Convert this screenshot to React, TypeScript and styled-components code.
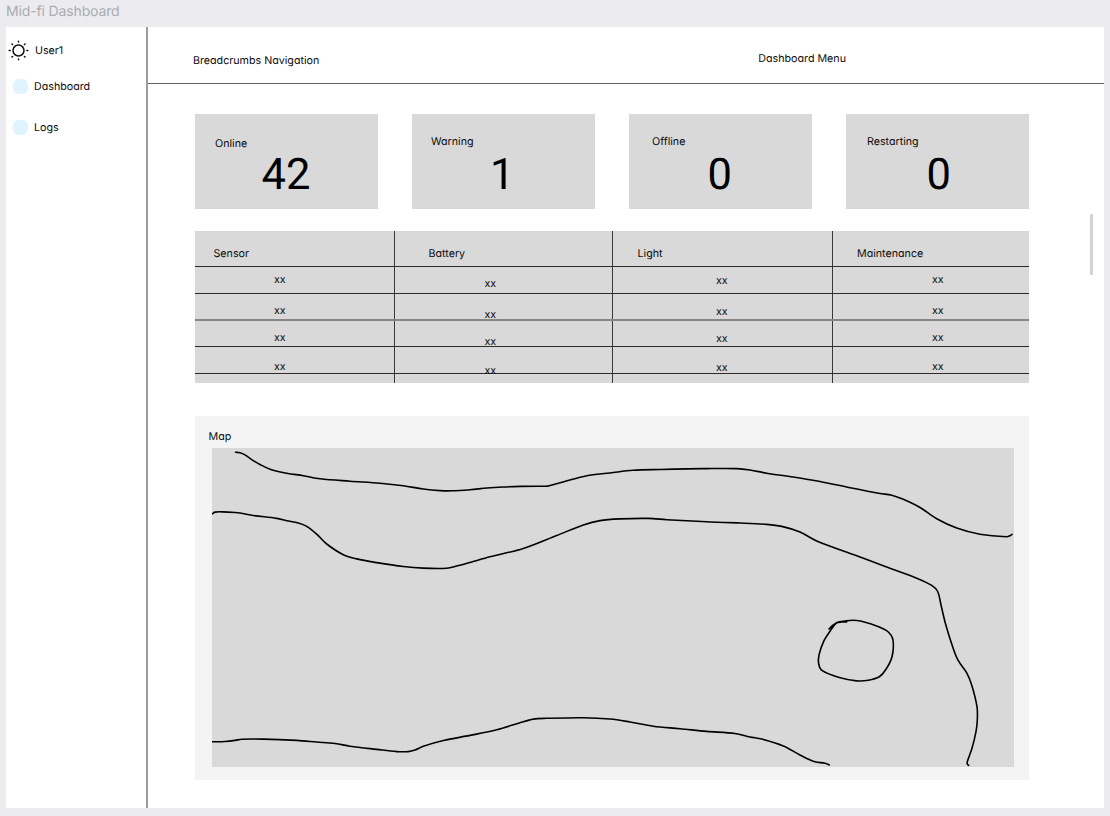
import React from "react";
import styled, { createGlobalStyle } from "styled-components";

const GlobalStyle = createGlobalStyle`
  * { box-sizing: border-box; }
  body {
    margin: 0;
    background: #ebebf0;
    color: #0c0c0c;
    font-family: Inter, "Liberation Sans", sans-serif;
    font-size: 10.7px;
    line-height: 16px;
    text-rendering: geometricPrecision;
  }
`;

const Canvas = styled.div`
  width: 1110px;
  height: 816px;
  padding: 0 6px 8px;
  display: flex;
  flex-direction: column;
  overflow: hidden;
`;

const FrameTitle = styled.div`
  height: 27px;
  flex: none;
  padding-top: 4px;
  font-size: 14px;
  line-height: 16px;
  letter-spacing: -0.14px;
  color: #acacb0;
`;

const Frame = styled.div`
  flex: 1;
  display: flex;
  background: #fff;
`;

const Label = styled.span`
  display: block;
  white-space: nowrap;
  font-feature-settings: "cv11";
`;

const Sidebar = styled.nav`
  width: 142px;
  flex: none;
  border-right: 2px solid #9c9c9c;
  padding: 13px 0 0 2px;
`;

const UserRow = styled.div`
  display: flex;
  align-items: center;
  gap: 6px;
  height: 21px;
`;

const NavItem = styled.div`
  display: flex;
  align-items: center;
  gap: 6px;
  height: 15px;
  margin: 18px 0 26px 5px;
  & + & { margin-top: 0; }
`;

const Dot = styled.i`
  width: 15px;
  height: 15px;
  border-radius: 6px;
  background: #dff4fe;
`;

const Main = styled.div`
  flex: 1;
  display: flex;
  flex-direction: column;
`;

const Header = styled.header`
  height: 57px;
  flex: none;
  display: flex;
  align-items: flex-start;
  border-bottom: 1px solid #606060;
  padding: 24px 258px 0 45px;
  justify-content: space-between;
`;

const Crumbs = styled.div`
  padding-top: 2px;
`;

const Body = styled.div`
  flex: 1;
  display: flex;
  justify-content: space-between;
  padding: 30px 11px 0 47px;
`;

const Content = styled.main`
  width: 834px;
`;

const ScrollThumb = styled.div`
  width: 3px;
  height: 61px;
  margin-top: 100px;
  border-radius: 1px;
  background: #d3d3d3;
`;

const Cards = styled.section`
  display: grid;
  grid-template-columns: repeat(4, 183px);
  justify-content: space-between;
`;

const Card = styled.div`
  height: 95px;
  background: #d9d9d9;
`;

const CardLabel = styled.div<{ $left: number; $top: number }>`
  height: 39px;
  padding: ${(p) => p.$top}px 0 0 ${(p) => p.$left}px;
`;

const CardValue = styled.div<{ $left: number }>`
  padding-left: ${(p) => p.$left}px;
  font-family: Roboto, sans-serif;
  font-size: 43.5px;
  line-height: 44px;
  color: #000;
`;

const Table = styled.section`
  margin-top: 22px;
  height: 152px;
  background: #d9d9d9;
`;

const Row = styled.div<{ $height: number; $line?: string }>`
  display: grid;
  grid-template-columns: 200px 218px 220px 196px;
  grid-template-rows: 100%;
  height: ${(p) => p.$height}px;
  border-bottom: ${(p) => p.$line ?? "1px solid #2c2c2c"};
`;

const Cell = styled.div<{ $left: number; $top: number }>`
  padding: ${(p) => p.$top}px 0 0 ${(p) => p.$left}px;
  border-right: 1px solid #3a3a3a;
  &:last-child { border-right: 0; }
`;

const MapPanel = styled.section`
  margin-top: 33px;
  height: 364px;
  padding: 13px 15px 0 13.5px;
  background: #f4f4f4;
`;

const MapArea = styled.svg`
  display: block;
  width: 802px;
  height: 319px;
  margin: 3px 0 0 3.5px;
  background: #d9d9d9;
`;

type Point = [number, number];

/* Smooth curve through every point (Catmull-Rom converted to cubic Béziers). */
function curve(pts: Point[]): string {
  let d = `M${pts[0][0]} ${pts[0][1]}`;
  for (let i = 0; i < pts.length - 1; i++) {
    const a = pts[Math.max(i - 1, 0)];
    const b = pts[i];
    const c = pts[i + 1];
    const e = pts[Math.min(i + 2, pts.length - 1)];
    const len = Math.hypot(c[0] - b[0], c[1] - b[1]);
    const handle = (p: Point, q: Point): Point => {
      const m = Math.hypot(q[0] - p[0], q[1] - p[1]) || 1;
      return [((q[0] - p[0]) / m) * (len / 3), ((q[1] - p[1]) / m) * (len / 3)];
    };
    const h1 = handle(a, c);
    const h2 = handle(b, e);
    d += `C${b[0] + h1[0]} ${b[1] + h1[1]} ${c[0] - h2[0]} ${c[1] - h2[1]} ${c[0]} ${c[1]}`;
  }
  return d;
}

const contours: Point[][] = [
  [[235.5, 452.3], [240, 452.7], [245, 454.9], [251.7, 459.7], [260, 464.5], [270, 469.2], [286.7, 473.2], [303.3, 475.7], [320, 478.8], [350, 481.2], [380, 483.2], [403.3, 485.7], [423.3, 489], [440, 490.6], [451.7, 490.8], [470, 489.7], [487, 488], [503, 487], [520, 486.4], [547.3, 486.2]],
  [[547.3, 486.2], [563, 482], [586.7, 475.7], [610, 473], [633, 470.3], [660, 469.5], [706.7, 468.6], [736.7, 468.6], [750, 470], [766.7, 473.2], [793.3, 477], [820, 481.5], [850, 487.7], [880, 493.5], [891.7, 495.2], [903.3, 499.3], [920, 507.5], [936.7, 518.7], [956.7, 528], [980, 534.2], [1006.7, 536.7], [1010.5, 535.4], [1012, 534.3]],
  [[212.6, 513.7], [215, 512.1], [223.3, 511.9], [238, 512.8], [253.3, 515.5], [276.7, 518.4], [286.7, 520.7], [298.3, 523.1], [306.7, 526.4], [316.7, 534.2], [326.7, 544], [343.3, 554.7], [356.7, 558.9], [376.7, 562.6], [403.3, 566.5], [423.3, 568.1], [446.7, 568.2], [456.7, 566], [470, 562.4], [490, 556.8], [523.3, 548.4], [556.7, 535.5], [583.3, 525], [600, 520.6], [620, 518.9], [648.3, 518.4], [666.7, 519.7], [706.7, 521.8], [740, 523], [766.7, 524.4], [781.7, 526.4], [800, 532], [816.7, 541], [856.7, 555.8], [886.7, 567.1], [916.7, 578.2], [931.7, 585.4], [937.7, 591.5], [941, 605], [945.7, 624.5], [953.3, 648.7], [958.3, 660.7], [966.7, 672.9], [971.7, 685], [977, 706.7], [977.3, 720], [976, 731.7], [972, 748.3], [967.3, 761.7], [967.4, 764.3], [968.7, 765.3]],
  [[829, 629], [833.3, 625], [838.3, 622], [856.7, 620.5], [876.7, 626], [888.3, 632], [893, 640], [892, 656.7], [886, 669.3], [879.3, 676.8], [868.3, 680.3], [856.7, 680.9], [838.3, 677.3], [822.3, 670.7], [818.7, 664], [819, 655], [824, 640.7], [830, 631.3], [836, 623.3], [841.7, 622], [846.7, 622]],
  [[212.5, 741.8], [225, 741.5], [235, 740.4], [241.7, 739.2], [263.3, 739.1], [296.7, 740.4], [316.7, 742], [335, 743.5], [350, 746.2], [376.7, 749.4], [396.7, 751.6], [408.3, 751.6], [415, 750], [423.3, 746.3], [443.3, 740.5], [470, 735.4], [496.7, 729.8], [520, 722.7], [533.3, 719.1], [546.7, 718.3], [583.3, 717.7], [610, 719], [630, 722], [653.3, 726.3], [680, 728.7], [706.7, 731.4], [735, 733.5], [750, 737], [761.7, 739.1], [783.3, 746], [800, 755], [815, 761.8], [825, 763.2], [829.3, 765]],
];

const stats = [
  { name: "Online", value: "42", left: 20, top: 22, valueLeft: 66.5 },
  { name: "Warning", value: "1", left: 19, top: 20, valueLeft: 78 },
  { name: "Offline", value: "0", left: 23, top: 20, valueLeft: 78.5 },
  { name: "Restarting", value: "0", left: 21, top: 20, valueLeft: 80.5 },
];

const columns = [
  { name: "Sensor", left: 18.5, cellLeft: 79, shift: 0 },
  { name: "Battery", left: 33.5, cellLeft: 89.5, shift: 4 },
  { name: "Light", left: 24.5, cellLeft: 103, shift: 1 },
  { name: "Maintenance", left: 24, cellLeft: 99, shift: 0 },
];

const rows = [
  { height: 27, top: 5, line: undefined },
  { height: 27, top: 9, line: "2px solid #858885" },
  { height: 26, top: 9, line: undefined },
  { height: 27, top: 12, line: undefined },
];

function SunIcon() {
  return (
    <svg width="21" height="21" viewBox="-10.5 -10.5 21 21" fill="none" stroke="#111">
      <circle r="5.5" strokeWidth="1.5" />
      {[0, 45, 90, 135, 180, 225, 270, 315].map((a) => (
        <path key={a} d="M8.4 0H9.3" strokeWidth="1.5" strokeLinecap="round" transform={`rotate(${a})`} />
      ))}
    </svg>
  );
}

export default function App() {
  return (
    <>
      <GlobalStyle />
      <Canvas>
        <FrameTitle>Mid-fi Dashboard</FrameTitle>
        <Frame>
          <Sidebar>
            <UserRow>
              <SunIcon />
              <Label>User1</Label>
            </UserRow>
            <NavItem><Dot /><Label>Dashboard</Label></NavItem>
            <NavItem><Dot /><Label>Logs</Label></NavItem>
          </Sidebar>
          <Main>
            <Header>
              <Crumbs><Label>Breadcrumbs Navigation</Label></Crumbs>
              <Label>Dashboard Menu</Label>
            </Header>
            <Body>
              <Content>
                <Cards>
                  {stats.map((s) => (
                    <Card key={s.name}>
                      <CardLabel $left={s.left} $top={s.top}><Label>{s.name}</Label></CardLabel>
                      <CardValue $left={s.valueLeft}>{s.value}</CardValue>
                    </Card>
                  ))}
                </Cards>
                <Table>
                  <Row $height={36}>
                    {columns.map((c) => (
                      <Cell key={c.name} $left={c.left} $top={15}><Label>{c.name}</Label></Cell>
                    ))}
                  </Row>
                  {rows.map((r, i) => (
                    <Row key={i} $height={r.height} $line={r.line}>
                      {columns.map((c) => (
                        <Cell key={c.name} $left={c.cellLeft} $top={r.top + c.shift}><Label>xx</Label></Cell>
                      ))}
                    </Row>
                  ))}
                  <Row $height={9} $line="0">
                    {columns.map((c) => <Cell key={c.name} $left={0} $top={0} />)}
                  </Row>
                </Table>
                <MapPanel>
                  <Label>Map</Label>
                  <MapArea viewBox="212 448 802 319" fill="none" stroke="#000" strokeWidth="1.6" strokeLinecap="round" strokeLinejoin="round">
                    {contours.map((c, i) => <path key={i} d={curve(c)} />)}
                  </MapArea>
                </MapPanel>
              </Content>
              <ScrollThumb />
            </Body>
          </Main>
        </Frame>
      </Canvas>
    </>
  );
}
